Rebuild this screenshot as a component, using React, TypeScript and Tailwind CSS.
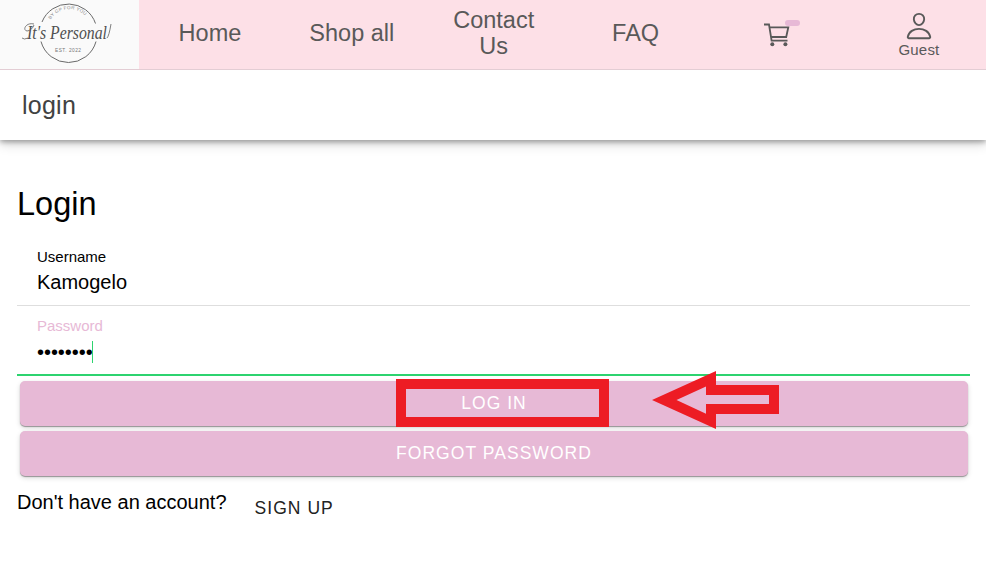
import type { ReactNode } from "react";

function Logo() {
  return (
    <svg width="139" height="69" viewBox="0 0 139 69" className="block shrink-0 bg-[#fafafa]">
      <g fill="none" stroke="#6a6a6a" strokeWidth="1">
        <path d="M42 22A28.500 28.500 0 0 1 95.500 23.500" />
        <path d="M41 41.500A28.500 28.500 0 0 0 96 41.500" />
      </g>
      <path id="logo-arc" d="M50.500 19.500A22.500 22.500 0 0 1 90 22.500" fill="none" />
      <text fontSize="4.600" fontFamily="Liberation Sans, sans-serif" letterSpacing="0.300" fill="#888">
        <textPath href="#logo-arc">BY GP FOR YOU</textPath>
      </text>
      <text x="27" y="38.500" fontStyle="italic" fontFamily="Liberation Serif, serif" fill="#505050" fontSize="18" textLength="80" lengthAdjust="spacingAndGlyphs">
        It's Personal
      </text>
      <path d="M34 24C26 22 22 30 27 31C30 31 33 28 34 25M28 38Q24 40 22 38M107 38Q109 36 111 24" fill="none" stroke="#606060" strokeWidth="0.800" />
      <text x="55" y="51.500" fontSize="4.800" fontFamily="Liberation Sans, sans-serif" fill="#777" textLength="26">EST. 2022</text>
    </svg>
  );
}

function Tab({ children }: { children: ReactNode }) {
  return (
    <div className="flex h-[69px] w-[141.9px] shrink-0 items-center justify-center px-6 pb-[3px] text-center text-[23.5px] leading-[26px]">
      {children}
    </div>
  );
}

function CartIcon() {
  return (
    <svg width="38" height="30" viewBox="763 18 38 30" className="ml-[9px] mt-[2px] block" fill="none" stroke="#595959" strokeWidth="1.800">
      <path d="M764 23.500H769L771.600 39.700H787.500M769.500 26.300H788.300L786.200 36H771" />
      <circle cx="772.300" cy="43.300" r="2" fill="#595959" stroke="none" />
      <circle cx="785.400" cy="43.300" r="2" fill="#595959" stroke="none" />
      <rect x="785" y="19" width="15" height="6" rx="3" fill="#e7b9d6" stroke="none" />
    </svg>
  );
}

function PersonIcon() {
  return (
    <svg width="30" height="30" viewBox="0 0 512 512" fill="none" stroke="#595959" strokeWidth="32" strokeLinejoin="round">
      <path d="M344 144c-3.920 52.870-44 96-88 96s-84.150-43.120-88-96c-4-55 35-96 88-96s92 42 88 96z" />
      <path d="M256 304c-87 0-175.300 48-191.640 138.600C62.390 453.520 68.570 464 80 464h352c11.440 0 17.620-10.480 15.650-21.400C431.300 352 343 304 256 304z" />
    </svg>
  );
}

const button =
  "relative flex h-[45px] items-center justify-center rounded-[5px] bg-[#e7b9d6] text-[17.5px] tracking-[1.05px] text-white shadow-[0_1px_1px_rgba(0,0,0,0.35),0_2px_5px_rgba(0,0,0,0.15)]";

export default function App() {
  return (
    <div className="h-[575px] w-full overflow-hidden bg-white font-['Liberation_Sans',Arial,sans-serif] text-black">
      <nav className="relative z-10 flex h-[70px] overflow-hidden border-b border-[#e3cdd4] bg-[#fde0e7] text-[#595959]">
        <Logo />
        <Tab>Home</Tab>
        <Tab>Shop all</Tab>
        <Tab>Contact Us</Tab>
        <Tab>FAQ</Tab>
        <Tab><CartIcon /></Tab>
        <div className="flex w-[141px] shrink-0 flex-col items-center pt-[11px] text-[15px] leading-[18px] tracking-[0.2px]">
          <PersonIcon />
          <span>Guest</span>
        </div>
      </nav>
      <header className="flex h-[70px] items-center px-[22px] pt-[2px] text-[25px] tracking-[0.25px] text-[#424242] shadow-[0_2px_5px_rgba(0,0,0,0.3),0_3px_12px_rgba(0,0,0,0.2)]">
        login
      </header>
      <main className="px-4 pt-[44px]">
        <h1 className="pl-px text-[32.5px] leading-10">Login</h1>
        <div className="ml-px mt-[23px] h-[59px] border-b border-[#dedede] pl-5">
          <div className="text-[15px] leading-5">Username</div>
          <div className="mt-[3px] text-xl leading-[24px]">Kamogelo</div>
        </div>
        <div className="ml-px h-[70px] border-b-2 border-[#2dd36f] pl-5 pt-[10px]">
          <div className="text-[15px] leading-5 text-[#e7b9d6]">Password</div>
          <div className="mt-[5px] flex h-[22px] items-center">
            <span className="w-[55px] text-xl leading-[22px] tracking-[-0.05px]">••••••••</span>
            <span className="h-[22px] w-[1px] shrink-0 bg-[#2dd36f]" />
          </div>
        </div>
        <div className="ml-1 mr-[2px] mt-[5px] flex flex-col gap-[5px]">
          <button className={button}>
            LOG IN
            <span className="absolute -top-[2px] left-[376px] h-[48px] w-[213px] border-10 border-[#ed1c24]" />
            <svg className="absolute -top-[10px] left-[632px]" width="128" height="59" viewBox="652 371 128 59">
              <path d="M652 400L716 371V385H779V414H716V429ZM676.500 400L706 413.800V404H769V395H706V386.500Z" fill="#ed1c24" fillRule="evenodd" />
            </svg>
          </button>
          <button className={button}>FORGOT PASSWORD</button>
        </div>
        <div className="flex pl-px">
          <span className="mt-[14px] text-xl leading-6">Don't have an account?</span>
          <button className="ml-[28px] mt-[20px] h-6 text-[17.5px] leading-6 tracking-[1.05px] text-[#222]">SIGN UP</button>
        </div>
      </main>
    </div>
  );
}
